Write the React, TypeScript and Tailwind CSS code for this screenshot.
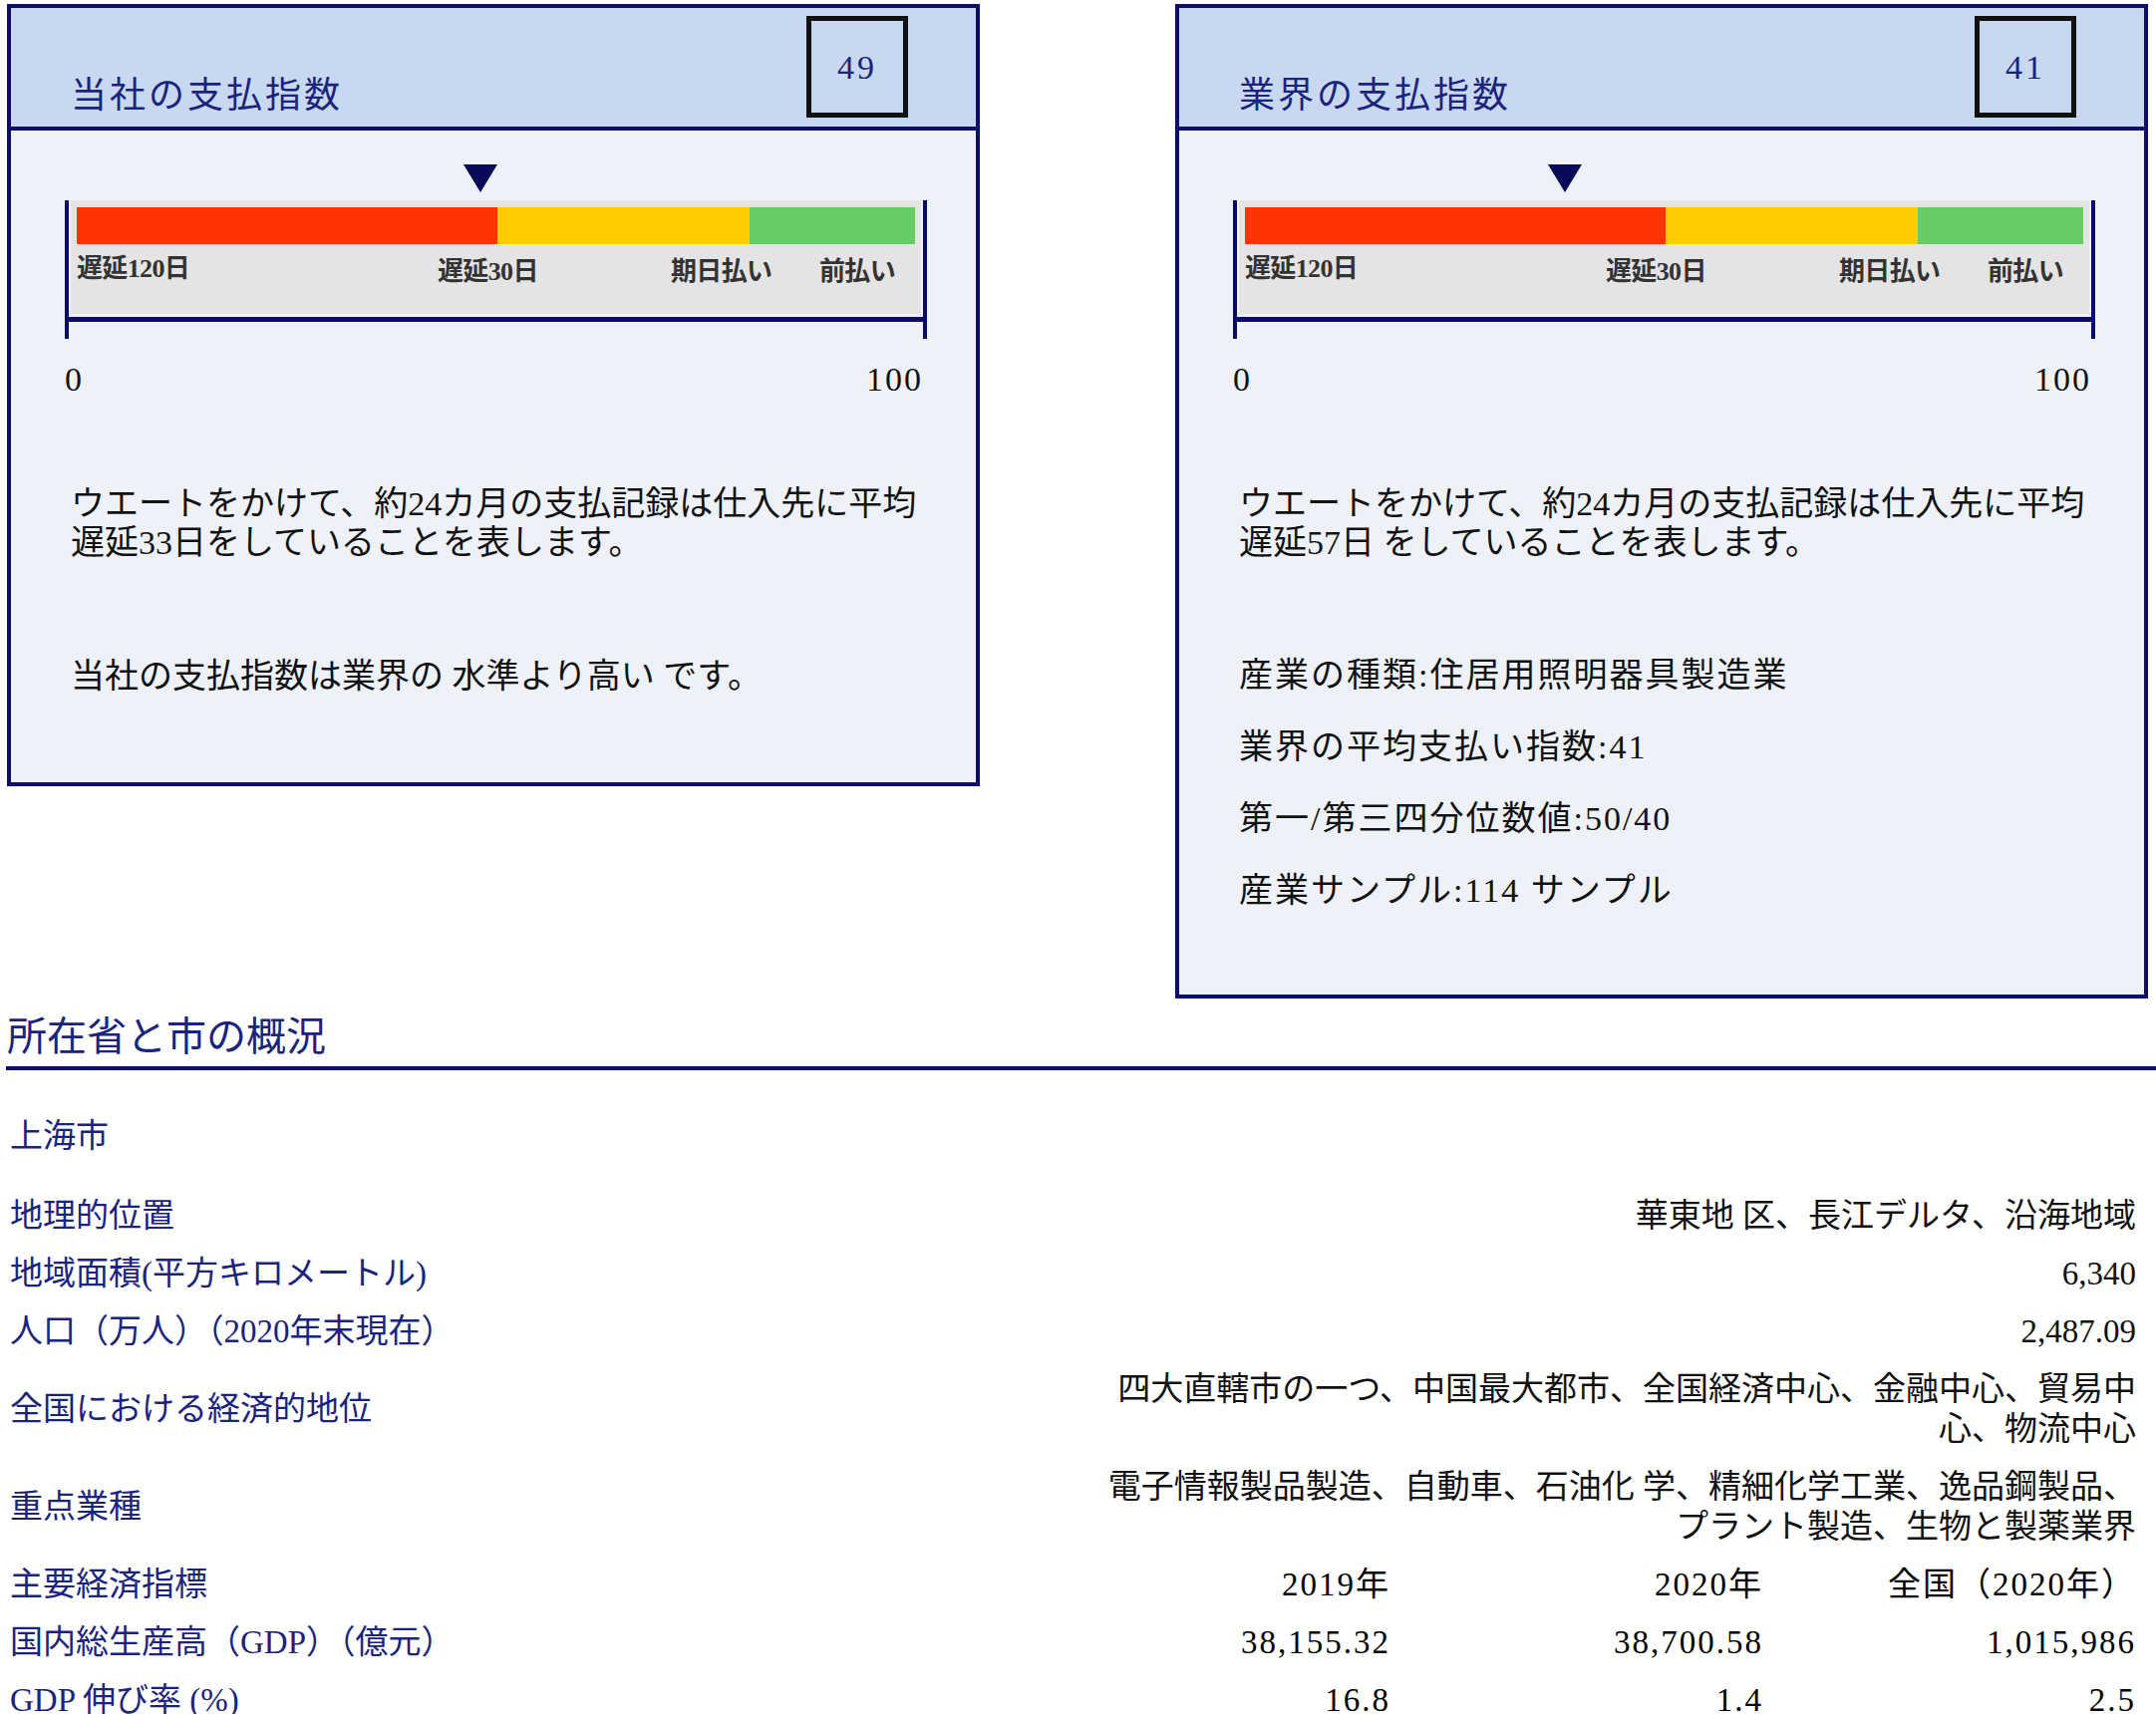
import React from "react";

const F = { fontFamily: '"Liberation Serif","Noto Sans CJK JP",serif' };

function Gauge({ pos }: { pos: number }) {
  return (
    <div className="relative ml-[54px] mt-[32px] w-[865px]">
      <div className="h-[28px]" style={{ marginLeft: pos }}>
        <svg width="34" height="30" viewBox="0 0 34 30"><polygon points="0,2 34,2 17,30" fill="#0a0a5a" /></svg>
      </div>
      <div className="mt-[10px] border-x-[4px] border-b-[5px] border-[#0a0a6a] h-[122px] relative">
        <div className="mx-[2px] bg-[#e4e4e4] h-[114px] pt-[7px] px-[6px]">
          <div className="flex h-[37px]">
            <div className="bg-[#ff3300] w-[422px]" />
            <div className="bg-[#ffcc00] w-[253px]" />
            <div className="bg-[#66cc66] flex-1" />
          </div>
          <div className="relative h-[50px] text-[26px] font-bold text-[#333] tracking-tight">
            <span className="absolute left-0 top-[5px]">遅延120日</span>
            <span className="absolute left-[362px] top-[8px]">遅延30日</span>
            <span className="absolute left-[596px] top-[8px]">期日払い</span>
            <span className="absolute left-[745px] top-[8px]">前払い</span>
          </div>
        </div>
        <div className="absolute left-[-4px] bottom-[-22px] w-[4px] h-[18px] bg-[#0a0a6a]" />
        <div className="absolute right-[-4px] bottom-[-22px] w-[4px] h-[18px] bg-[#0a0a6a]" />
      </div>
      <div className="flex justify-between mt-[32px] text-[34px] tracking-[2px] text-[#111] pr-[4px]">
        <span>0</span><span>100</span>
      </div>
    </div>
  );
}

function Panel({ title, score, pos, w, h, children }: any) {
  return (
    <div className={`border-[4px] border-[#0d0d6b] bg-[#eef2f8] ${w} ${h}`}>
      <div className="h-[123px] bg-[#c8d8f0] border-b-[4px] border-[#0d0d6b] flex items-end justify-between pl-[60px] pr-[66px] relative">
        <div className="text-[36px] text-[#1a237e] tracking-[3px] pb-[4px]">{title}</div>
        <div className="absolute right-[68px] top-[8px] w-[102px] h-[102px] border-[5px] border-[#111] flex items-center justify-center text-[34px] text-[#1a237e] tracking-[3px]">{score}</div>
      </div>
      <Gauge pos={pos} />
      <div className="pl-[60px] text-[34px] text-[#111] leading-[39px] mt-[80px]">{children}</div>
    </div>
  );
}

export default function App() {
  const rows: [string, string][] = [
    ["地理的位置", "華東地 区、長江デルタ、沿海地域"],
    ["地域面積(平方キロメートル)", "6,340"],
    ["人口（万人）（2020年末現在）", "2,487.09"],
  ];
  return (
    <div style={F} className="w-[2163px] h-[1720px] bg-white pt-[4px] overflow-hidden">
      <div className="flex justify-between pl-[7px] pr-[8px] items-start">
        <Panel title="当社の支払指数" score="49" pos={400} w="w-[976px]" h="h-[785px]">
          <div>ウエートをかけて、約24カ月の支払記録は仕入先に平均</div>
          <div>遅延33日をしていることを表します。</div>
          <div className="mt-[95px]">当社の支払指数は業界の 水準より高い です。</div>
        </Panel>
        <Panel title="業界の支払指数" score="41" pos={316} w="w-[976px]" h="h-[998px]">
          <div>ウエートをかけて、約24カ月の支払記録は仕入先に平均</div>
          <div>遅延57日 をしていることを表します。</div>
          <div className="mt-[94px] flex flex-col gap-[33px] tracking-[2px]">
            <div>産業の種類:住居用照明器具製造業</div>
            <div>業界の平均支払い指数:41</div>
            <div>第一/第三四分位数値:50/40</div>
            <div>産業サンプル:114 サンプル</div>
          </div>
        </Panel>
      </div>
      <div className="mt-[14px] pl-[7px] text-[40px] text-[#1a237e] leading-[50px]">所在省と市の概況</div>
      <div className="ml-[6px] h-[4px] bg-[#0d0d6b] mt-[4px]" />
      <div className="px-[10px] pr-[20px] text-[33px] leading-[40px]">
        <div className="mt-[46px] text-[#1a237e]">上海市</div>
        <div className="mt-[40px] flex flex-col gap-[18px]">
          {rows.map(([a, b]) => (
            <div key={a} className="flex justify-between">
              <span className="text-[#1a237e]">{a}</span>
              <span className="text-[#111]">{b}</span>
            </div>
          ))}
          <div className="flex justify-between items-center">
            <span className="text-[#1a237e]">全国における経済的地位</span>
            <span className="text-[#111] text-right w-[1040px]">四大直轄市の一つ、中国最大都市、全国経済中心、金融中心、貿易中心、物流中心</span>
          </div>
          <div className="flex justify-between items-center">
            <span className="text-[#1a237e]">重点業種</span>
            <span className="text-[#111] text-right w-[1040px]">電子情報製品製造、自動車、石油化 学、精細化学工業、逸品鋼製品、プラント製造、生物と製薬業界</span>
          </div>
          {[
            ["主要経済指標", "2019年", "2020年", "全国（2020年）"],
            ["国内総生産高（GDP）（億元）", "38,155.32", "38,700.58", "1,015,986"],
            ["GDP 伸び率 (%)", "16.8", "1.4", "2.5"],
          ].map((r) => (
            <div key={r[0]} className="flex">
              <span className="text-[#1a237e] flex-1">{r[0]}</span>
              <span className="w-[300px] text-right tracking-[2px]">{r[1]}</span>
              <span className="w-[374px] text-right tracking-[2px]">{r[2]}</span>
              <span className="w-[374px] text-right tracking-[2px]">{r[3]}</span>
            </div>
          ))}
        </div>
      </div>
    </div>
  );
}
